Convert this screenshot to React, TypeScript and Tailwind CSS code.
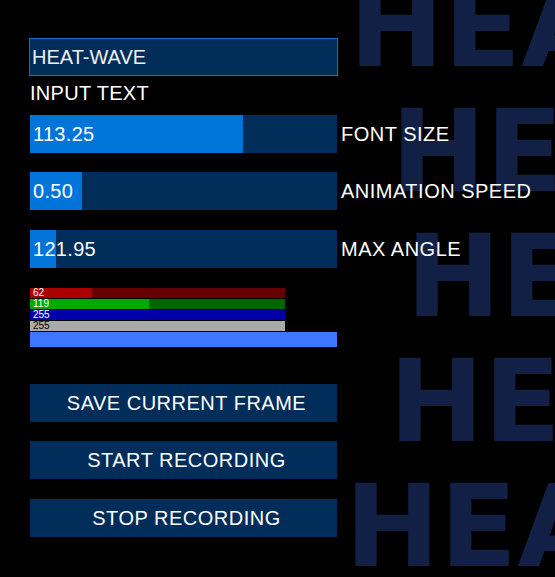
const waveRows = [
  { text: "HEAT-WAVE", cls: "left-[349px] top-[-35px]" },
  { text: "HEAT-WAVE", cls: "left-[391px] top-[90px]" },
  { text: "HEAT-WAVE", cls: "left-[406px] top-[215px]" },
  { text: "HEAT-WAVE", cls: "left-[389px] top-[340px]" },
  { text: "HEAT-WAVE", cls: "left-[345px] top-[465px]" },
];

const sliders = [
  { value: "113.25", fill: 213, label: "FONT SIZE", gap: "" },
  { value: "0.50", fill: 52, label: "ANIMATION SPEED", gap: "mt-[19px]" },
  { value: "121.95", fill: 26, label: "MAX ANGLE", gap: "mt-[20px]" },
];

const channels = [
  { value: 62, fill: "bg-[#aa0000]", back: "bg-[#660000]", text: "text-white" },
  { value: 119, fill: "bg-[#00aa00]", back: "bg-[#006600]", text: "text-white" },
  { value: 255, fill: "bg-[#0000aa]", back: "bg-[#000066]", text: "text-white" },
  { value: 255, fill: "bg-[#aaaaaa]", back: "bg-[#666666]", text: "text-black" },
];

const buttons = [
  { label: "SAVE CURRENT FRAME", gap: "mt-[37px]" },
  { label: "START RECORDING", gap: "mt-[19px]" },
  { label: "STOP RECORDING", gap: "mt-[20px]" },
];

export default function App() {
  return (
    <div className="relative w-[555px] h-[577px] overflow-hidden bg-black font-['Liberation_Sans',Arial,sans-serif] text-white">
      {/* animated background text */}
      <div className="absolute inset-0 pointer-events-none">
        {waveRows.map((row, i) => (
          <div
            key={i}
            className={`absolute ${row.cls} whitespace-nowrap font-['DejaVu_Sans',sans-serif] font-bold text-[113.25px] leading-[125px] text-[#132046]`}
          >
            {row.text}
          </div>
        ))}
      </div>

      <div className="relative flex flex-col pt-[38px] pl-[29px]">
        <div className="flex items-center w-[309px] h-[38px] border border-[#0074d9] bg-[#002d5a] pl-[2px] text-[20px] text-[#f0f0f0]">
          HEAT-WAVE
        </div>
        <div className="mt-[6px] pl-[1px] text-[20px] leading-[23px] tracking-[0.3px]">INPUT TEXT</div>

        <div className="flex flex-col mt-[10px] ml-[1px]">
          {sliders.map((s) => (
            <div key={s.label} className={`flex items-center ${s.gap}`}>
              <div className="relative flex items-center w-[307px] h-[38px] bg-[#002d5a]">
                <div className="absolute left-0 top-0 h-full bg-[#0074d9]" style={{ width: s.fill }} />
                <span className="relative pl-[3px] text-[20px] tracking-[0.3px]">{s.value}</span>
              </div>
              <span className="ml-[4px] text-[20px] whitespace-nowrap tracking-[0.5px]">{s.label}</span>
            </div>
          ))}
        </div>

        <div className="flex flex-col gap-[1px] mt-[20px] ml-[1px]">
          {channels.map((c, i) => (
            <div key={i} className={`relative flex items-center w-[255px] h-[10px] ${c.back}`}>
              <div className={`absolute left-0 top-0 h-full ${c.fill}`} style={{ width: c.value }} />
              <span className={`relative pl-[3px] text-[10px] leading-[10px] ${c.text}`}>{c.value}</span>
            </div>
          ))}
          <div className="w-[307px] h-[15px] bg-[#3e77ff]" />
        </div>

        <div className="flex flex-col ml-[1px]">
          {buttons.map((b) => (
            <button
              key={b.label}
              className={`${b.gap} flex items-center justify-center w-[307px] h-[38px] bg-[#002d5a] pl-[6px] text-[20px] tracking-[0.5px] text-white`}
            >
              {b.label}
            </button>
          ))}
        </div>
      </div>
    </div>
  );
}
